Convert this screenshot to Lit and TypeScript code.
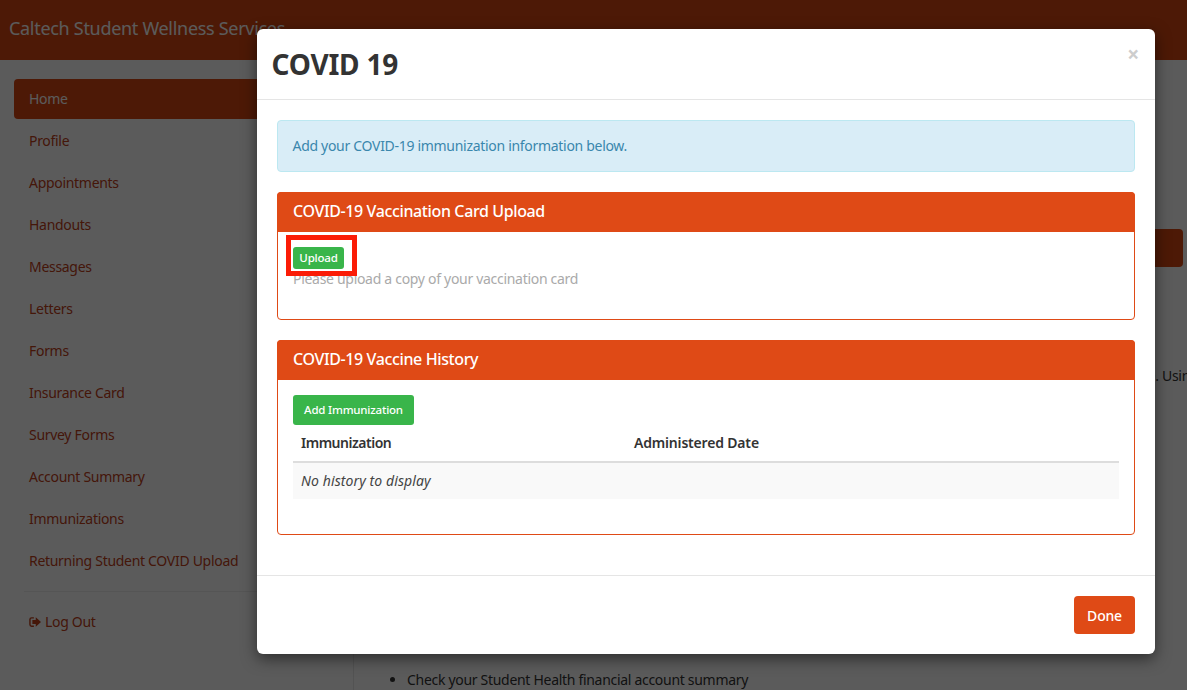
import { LitElement, html, css, svg } from "lit";
import { customElement } from "lit/decorators.js";

const NAV = ["Home","Profile","Appointments","Handouts","Messages","Letters","Forms","Insurance Card","Survey Forms","Account Summary","Immunizations","Returning Student COVID Upload"];

@customElement("app-root")
export class AppRoot extends LitElement {
  static styles = css`
    :host { display: block; height: 690px; overflow: hidden; position: relative; font-family: "Noto Sans", "Open Sans", sans-serif; font-size: 14px; line-height: 20px; color: #333; letter-spacing: -0.3px; background: #fff; }
    * { box-sizing: border-box; }
    .topbar { height: 60px; background: #d94712; color: #fff; font-size: 18px; line-height: 57px; padding-left: 9px; }
    .page { display: flex; height: 630px; }
    .side { width: 354px; flex: none; padding: 19px 14px 0 14px; border-right: 1px solid #e7e7e7; }
    .side a { display: block; height: 40px; line-height: 40px; padding: 0 15px; margin-bottom: 2px; color: #c0401a; border-radius: 4px; }
    .side a.active { background: #d94712; color: #fff; }
    .side hr { border: 0; border-top: 1px solid #eee; margin: 10px 0 10px 10px; }
    .logout { display: flex !important; align-items: center; gap: 4px; }
    .logout svg { width: 12px; height: 12px; flex: none; fill: currentColor; }
    .main { flex: 1; min-width: 0; padding-top: 169px; overflow: hidden; }
    .mainbtn { height: 38px; margin-right: 4px; background: #d94712; border-radius: 4px; }
    .line { margin: 99px 0 0; white-space: nowrap; padding-left: 496px; }
    .main ul { margin: 284px 0 0; padding-left: 53px; white-space: nowrap; }

    .backdrop { position: absolute; inset: 0; background: rgba(0,0,0,.645); display: flex; justify-content: flex-start; padding: 29px 0 0 257px; }
    .modal { width: 898px; height: 625px; background: #fff; border-radius: 6px; box-shadow: 0 5px 15px rgba(0,0,0,.5); flex: none; }
    .mhead { height: 71px; padding: 15px; border-bottom: 1px solid #e5e5e5; display: flex; justify-content: space-between; }
    .mhead h1 { margin: 0 0 0 -0.5px; font-size: 28px; line-height: 40px; font-weight: 700; color: #333; letter-spacing: -0.2px; }
    .close { font-size: 21px; font-weight: 700; line-height: 20px; color: #cdcdcd; padding-right: 1px; }
    .mbody { padding: 20px 20px 0; }
    .alert { height: 52px; padding: 15px 15px 15px 14.5px; border: 1px solid #bce8f1; background: #d9edf7; color: #3a87ad; border-radius: 4px; margin-bottom: 20px; }
    .panel { border: 1px solid #df4a16; border-radius: 4px; margin-bottom: 20px; }
    .panel:last-child { margin-bottom: 40px; }
    .phead { background: #df4a16; color: #fff; font-size: 16px; font-weight: 500; line-height: 38px; padding: 0 16px; margin: -1px -1px 0; height: 40px; border-radius: 4px 4px 0 0; letter-spacing: -0.38px; }
    .pbody { padding: 15px; position: relative; }
    .p1 { padding-bottom: 30px; }
    .btn { display: block; border: 0; background: #39b54a; color: #fff; font-family: inherit; font-weight: 500; border-radius: 3px; padding: 0; }
    .upload { width: 51px; height: 22px; font-size: 11.5px; line-height: 22px; letter-spacing: -0.2px; }
    .add { width: 121px; height: 30px; font-size: 11.5px; line-height: 30px; letter-spacing: -0.2px; }
    .muted { color: #aaa; }
    .mark { position: absolute; left: 8px; top: 3px; width: 71px; height: 41px; border: 5px solid #fb1c06; pointer-events: none; }
    table { width: 100%; border-collapse: separate; border-spacing: 0; margin-bottom: 20px; table-layout: fixed; }
    th { text-align: left; font-weight: 600; padding: 8px; line-height: 20px; height: 38px; border-bottom: 2px solid #ddd; letter-spacing: -0.18px; }
    th:first-child { width: 333px; letter-spacing: -0.48px; }
    td { padding: 8px; height: 36px; background: #f9f9f9; font-style: italic; letter-spacing: 0.1px; color: #444; }
    .mfoot { border-top: 1px solid #e5e5e5; padding: 20px; display: flex; justify-content: flex-end; }
    .done { width: 61px; height: 38px; background: #df4a16; color: #fff; font-weight: 500; border: 0; border-radius: 4px; font-family: inherit; font-size: 14px; letter-spacing: -0.2px; }
  `;

  render() {
    return html`
      <div class="topbar">Caltech Student Wellness Services</div>
      <div class="page">
        <aside class="side">
          ${NAV.map((n, i) => html`<a class=${i === 0 ? "active" : ""}>${n}</a>`)}
          <hr />
          <a class="logout"><svg viewBox="0 0 16 16">${svg`<path d="M6.5 1.5H3.5A3.2 3.2 0 0 0 .3 4.7v6.6a3.2 3.2 0 0 0 3.2 3.2h3v-1.9h-3a1.3 1.3 0 0 1-1.3-1.3V4.7a1.3 1.3 0 0 1 1.3-1.3h3z"/><path d="M9 1.8 16 8l-7 6.2V10.6H4.5V5.4H9z"/>`}</svg>Log Out</a>
        </aside>
        <main class="main">
          <div class="mainbtn"></div>
          <p class="line">Your records are kept on this portal for your care. Using the links</p>
          <ul><li>Check your Student Health financial account summary</li></ul>
        </main>
      </div>
      <div class="backdrop">
        <div class="modal">
          <div class="mhead"><h1>COVID 19</h1><span class="close">×</span></div>
          <div class="mbody">
            <div class="alert">Add your COVID-19 immunization information below.</div>
            <section class="panel">
              <div class="phead">COVID-19 Vaccination Card Upload</div>
              <div class="pbody p1">
                <button class="btn upload">Upload</button>
                <div class="muted">Please upload a copy of your vaccination card</div>
                <div class="mark"></div>
              </div>
            </section>
            <section class="panel">
              <div class="phead">COVID-19 Vaccine History</div>
              <div class="pbody">
                <button class="btn add">Add Immunization</button>
                <table>
                  <thead><tr><th>Immunization</th><th>Administered Date</th></tr></thead>
                  <tbody><tr><td colspan="2">No history to display</td></tr></tbody>
                </table>
              </div>
            </section>
          </div>
          <div class="mfoot"><button class="done">Done</button></div>
        </div>
      </div>
    `;
  }
}
